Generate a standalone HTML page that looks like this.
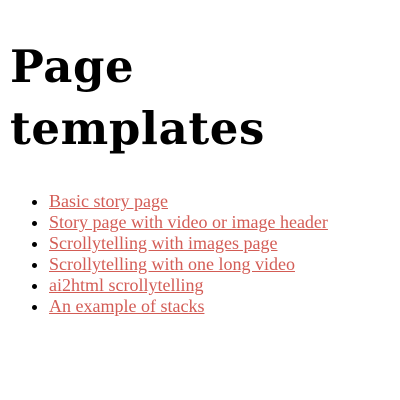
<!DOCTYPE html>
<html><head><meta charset="utf-8"><style>
html,body{margin:0;background:#fff;}
body{padding:8px;width:384px;height:384px;overflow:hidden;}
h1{font-family:"DejaVu Serif",serif;font-weight:bold;font-size:45px;line-height:62px;letter-spacing:0.6px;margin:28px 0 0 2px;color:#000;}
ul{margin:31px 0 0 0;padding-left:41px;font-family:"Liberation Serif",serif;font-size:18px;line-height:21px;}
a{color:#d35c55;text-decoration:underline;}
li::marker{color:#000;}
</style></head><body>
<h1>Page<br>templates</h1>
<ul>
<li><a>Basic story page</a></li>
<li><a>Story page with video or image header</a></li>
<li><a>Scrollytelling with images page</a></li>
<li><a>Scrollytelling with one long video</a></li>
<li><a>ai2html scrollytelling</a></li>
<li><a>An example of stacks</a></li>
</ul>
</body></html>
